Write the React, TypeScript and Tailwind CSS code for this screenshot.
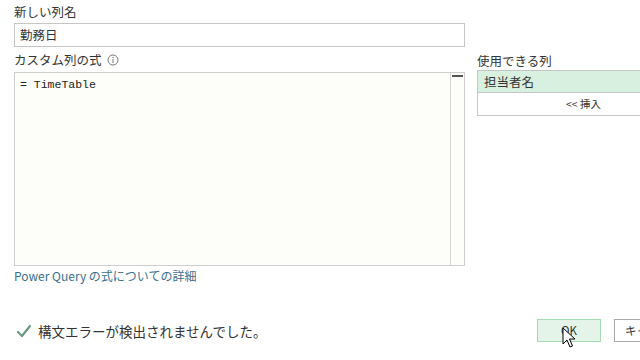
import React from 'react'

const jp = { fontFamily: '"Segoe UI", "Noto Sans CJK JP", "Noto Sans", sans-serif' }

function InfoIcon() {
    return (
        <svg width="12" height="12" viewBox="0 0 12 12" className="ml-[5px]">
            <circle cx="6" cy="6" r="5" fill="none" stroke="#777" strokeWidth="1" />
            <line x1="6" y1="5" x2="6" y2="9" stroke="#777" strokeWidth="1" />
            <circle cx="6" cy="3.4" r="0.7" fill="#777" />
        </svg>
    )
}

function Pointer() {
    return (
        <svg width="14" height="22" viewBox="0 0 14 22" className="absolute left-[562px] top-[327px]">
            <path d="M1 1 L1 17 L5 13 L8 20 L10.5 19 L7.5 12 L13 12 Z" fill="#fff" stroke="#000" strokeWidth="1" strokeLinejoin="round" />
        </svg>
    )
}

export default function App() {
    return (
        <div className="relative w-[640px] h-[360px] overflow-hidden bg-white text-[#333]" style={jp}>
            <div className="pl-[14px] pt-[3px]">
                <div className="text-[12.5px] leading-[18px]">新しい列名</div>
                <div className="mt-[2px] w-[451px] h-[24px] border border-[#c6c6c6] bg-white px-[5px] text-[12.5px] leading-[22px]">
                    勤務日
                </div>

                <div className="flex mt-[4px]">
                    <div className="w-[451px] shrink-0">
                        <div className="flex items-center text-[12.5px] leading-[18px]">
                            カスタム列の式
                            <InfoIcon />
                        </div>
                        <div className="mt-[3px] flex h-[194px] border border-[#cdcdcd] bg-[#fdfdfa]">
                            <div
                                className="flex-1 px-[5px] pt-[4px] text-[11.5px] leading-[16px] text-[#222]"
                                style={{ fontFamily: '"Liberation Mono", "DejaVu Sans Mono", monospace' }}
                            >
                                = TimeTable
                            </div>
                            <div className="w-[14px] border-l border-[#d6d6d6] pt-[2px]">
                                <div className="mx-[1px] h-[2px] bg-[#555]" />
                            </div>
                        </div>
                        <div className="mt-[2px] text-[12px] leading-[16px] text-[#3b6f8c]">
                            Power Query の式についての詳細
                        </div>
                    </div>

                    <div className="ml-[12px] w-[180px] shrink-0 pt-[1px]">
                        <div className="text-[12.5px] leading-[17px]">使用できる列</div>
                        <div className="mt-[1px] border border-[#c6c6c6]">
                            <div className="h-[21px] bg-[#d8f0df] pl-[6px] text-[12.5px] leading-[21px]">担当者名</div>
                            <div className="h-[23px] border-t border-[#c6c6c6] bg-white pl-[88px] text-[10.5px] leading-[22px]">
                                &lt;&lt; 挿入
                            </div>
                        </div>
                    </div>
                </div>
            </div>

            <div className="flex items-center mt-[35px] pl-[16px]">
                <div className="flex items-center w-[521px] shrink-0">
                    <svg width="16" height="14" viewBox="0 0 16 14">
                        <path d="M2 8 L6 12 L14 2" fill="none" stroke="#6b9a80" strokeWidth="2.2" strokeLinecap="round" strokeLinejoin="round" />
                    </svg>
                    <span className="ml-[6px] text-[13.5px] leading-[20px]">構文エラーが検出されませんでした。</span>
                </div>
                <div className="flex shrink-0">
                    <div className="w-[64px] h-[23px] border border-[#a4d9b4] bg-[#e4f4e9] text-center text-[11.5px] leading-[21px]">
                        OK
                    </div>
                    <div className="ml-[13px] w-[64px] h-[23px] border border-[#a9a9a9] bg-white pl-[10px] text-[11.5px] leading-[21px] whitespace-nowrap">
                        キャンセル
                    </div>
                </div>
            </div>

            <Pointer />
        </div>
    )
}
